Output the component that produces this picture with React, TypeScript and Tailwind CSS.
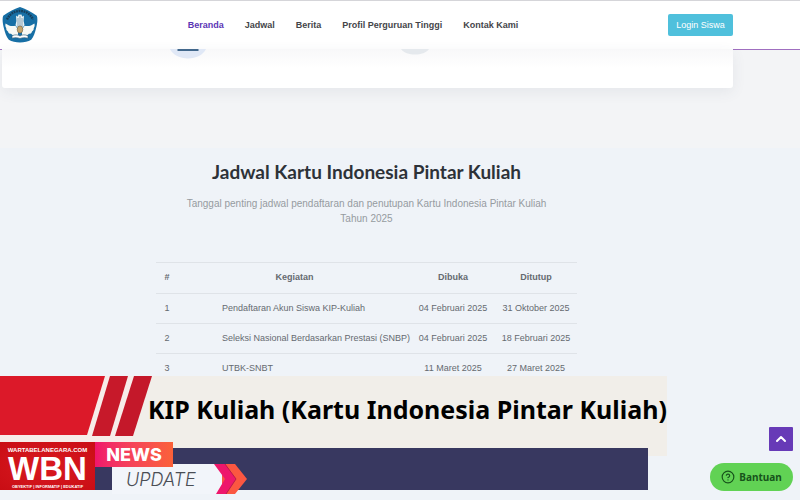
import { ChevronUp, CircleHelp } from 'lucide-react';
import { clsx } from 'clsx';

const NAV_ITEMS = ['Beranda', 'Jadwal', 'Berita', 'Profil Perguruan Tinggi', 'Kontak Kami'];

interface ScheduleRow {
  activity: string;
  opens: string;
  closes: string;
}

const SCHEDULE: ScheduleRow[] = [
  { activity: 'Pendaftaran Akun Siswa KIP-Kuliah', opens: '04 Februari 2025', closes: '31 Oktober 2025' },
  { activity: 'Seleksi Nasional Berdasarkan Prestasi (SNBP)', opens: '04 Februari 2025', closes: '18 Februari 2025' },
  { activity: 'UTBK-SNBT', opens: '11 Maret 2025', closes: '27 Maret 2025' },
];

function MinistryLogo() {
  return (
    <svg viewBox="0 0 36 36" className="size-9" aria-hidden="true">
      <path d="M18 0C23 2 29.500 4.500 34.800 8.800c1.300 3.600.2 8.600-.8 12.800-1 4-2.200 8-4.800 11.200-5.800 3.500-16.600 3.500-22.400 0C4.200 29.600 3 25.600 2 21.600 1 17.400-.1 12.400 1.200 8.800 6.500 4.500 13 2 18 0z" fill="#176fa5" />
      <path d="M5 12.500C8 6.500 12.500 4 18 4s10 2.500 13 8.500" fill="none" stroke="#163f5c" strokeWidth="2.400" strokeDasharray="1.800 .7" />
      <path d="M3.600 16.500c3 2.300 6.400 3.200 9.800 2.200l2.600 3.800v5.800c-3 .9-5.600.2-7-1.500-1.700-.2-2.700-1-3-2.400-1.300-.8-1.900-1.900-1.700-3.200-1-1.400-1.200-3-.7-4.700zM32.400 16.500c-3 2.300-6.400 3.200-9.800 2.200L20 22.500v5.800c3 .9 5.600.2 7-1.500 1.700-.2 2.700-1 3-2.400 1.300-.8 1.900-1.900 1.700-3.200 1-1.400 1.200-3 .7-4.700z" fill="#f7f9f5" />
      <path d="M14 8.500l1.500 1.200L17 7l1 1.200L19 7l1.500 2.700L22 8.500l-.4 5.500.9 4-2.500 4h-4l-2.500-4 .9-4z" fill="#e6eff1" />
      <path d="M16 11v9M18 9v12M20 11v9" stroke="#5a8298" strokeWidth=".7" />
      <ellipse cx="18" cy="22.500" rx="2.800" ry="3.600" fill="#c3a46b" stroke="#705c3d" strokeWidth=".6" />
      <path d="M10 28.800c2.900-1.400 5.800-1.200 8 .2 2.200-1.400 5.100-1.600 8-.2v2.400c-3-.9-5.800-.6-8 .3-2.200-.9-5-1.200-8-.3z" fill="#fff" stroke="#24516b" strokeWidth=".6" />
    </svg>
  );
}

function Header() {
  return (
    <header className="flex h-[49px] items-center border-t border-[#d5d5d9] bg-white pr-[67px] pl-[2px]">
      <a href="#" aria-label="Kemdikbud">
        <MinistryLogo />
      </a>
      <nav className="flex flex-1 justify-center gap-[21px] pt-px text-[9px] font-bold text-[#444549]">
        {NAV_ITEMS.map((item, index) => (
          <a key={item} href="#" className={clsx('whitespace-nowrap', index === 0 && 'text-[#5b35b5]')}>
            {item}
          </a>
        ))}
      </nav>
      <button className="h-[22px] w-[65px] rounded-[2px] bg-[#4fc0dc] pt-px text-[9px] text-white">Login Siswa</button>
    </header>
  );
}

// Bottom edge of the feature card that scrolls under the header
function FeatureCard() {
  return (
    <section className="h-[99px] border-t border-[#a06fc0] bg-[#f3f4f6] pr-[67px] pl-[2px]">
      <div className="-mt-px flex h-[39px] items-start rounded-b-[3px] bg-linear-to-b from-[#f8f8f9] to-white to-50% pl-[168px] shadow-[0_4px_14px_rgba(60,80,100,0.08)]">
        <svg viewBox="0 0 36 10" className="h-[10px] w-9" aria-hidden="true">
          <path d="M0 0h36c-3 6-10 9.500-18 9.500S3 6 0 0z" fill="#e0e8f6" />
          <path d="M7.500 0h21v2h-21z" fill="#42688c" />
        </svg>
        <svg viewBox="0 0 32 10" className="ml-[194px] h-[10px] w-8" aria-hidden="true">
          <path d="M1 0h28c-3 4-8 5.500-14 5.500S4 4 1 0z" fill="#e5e9ed" />
        </svg>
      </div>
    </section>
  );
}

function Schedule() {
  return (
    <section className="flex flex-col items-center pt-3 pr-[67px]">
      <h1 className="font-[Lato,sans-serif] text-[19px] leading-6 font-bold text-[#2d3238]">
        Jadwal Kartu Indonesia Pintar Kuliah
      </h1>
      <p className="mt-3 w-[370px] text-center text-[10px] leading-[15px] text-[#969ba0]">
        Tanggal penting jadwal pendaftaran dan penutupan Kartu Indonesia Pintar Kuliah Tahun 2025
      </p>
      <table className="mt-9 w-[421px] table-fixed border-collapse text-center text-[9px] text-[#656a70]">
        <colgroup>
          <col className="w-[22px]" />
          <col />
          <col className="w-[84px]" />
          <col className="w-[82px]" />
        </colgroup>
        <thead>
          <tr className="h-[31px] border-y border-[#dfe3e8]">
            <th>#</th>
            <th>Kegiatan</th>
            <th>Dibuka</th>
            <th>Ditutup</th>
          </tr>
        </thead>
        <tbody>
          {SCHEDULE.map((row, index) => (
            <tr key={row.activity} className="h-[30px] border-b border-[#dfe3e8]">
              <td>{index + 1}</td>
              <td className="pl-11 text-left whitespace-nowrap">{row.activity}</td>
              <td>{row.opens}</td>
              <td>{row.closes}</td>
            </tr>
          ))}
        </tbody>
      </table>
    </section>
  );
}

function NewsBanner() {
  return (
    <aside className="absolute inset-x-0 bottom-0 h-[124px]">
      <div className="flex h-20 w-5/6 items-start bg-[#f1eee9]">
        <svg viewBox="0 0 152 66" className="h-[66px] w-[152px] shrink-0" aria-hidden="true">
          <path d="M0 0h152l-20 60v6H0z" fill="#f7ece9" />
          <path d="M0 0h105L87 59H0z" fill="#dc1929" />
          <path d="M110 0h18l-18 60H92z" fill="#c7192a" />
          <path d="M134 0h18l-19 60h-18z" fill="#c4182a" />
        </svg>
        <h2 className="-ml-1 pt-4 font-['Noto_Sans',sans-serif] text-[25px] leading-[34px] font-bold whitespace-nowrap text-black">
          KIP Kuliah (Kartu Indonesia Pintar Kuliah)
        </h2>
      </div>
      <div className="-mt-[14px] flex w-[81%] items-start">
        <div className="flex h-12 w-[95px] shrink-0 flex-col items-center bg-radial from-[#d91920] to-[#c90d14] pt-[5px] font-bold whitespace-nowrap text-white">
          <span className="text-[6px] leading-[6px]">WARTABELANEGARA.COM</span>
          <span className="text-[33px] leading-[31px]">WBN</span>
          <span className="text-[4px] leading-[5px]">OBYEKTIF | INFORMATIF | EDUKATIF</span>
        </div>
        <div className="mt-[6px] h-[42px] flex-1 bg-[#383860]">
          <div className="relative -mt-[6px] flex h-[25px] w-[78px] items-center justify-center bg-linear-to-r from-[#f0146c] to-[#fb6138] font-[Inter,sans-serif] text-[18px] font-extrabold text-white">
            NEWS
          </div>
          <div className="-mt-[3px] ml-[17px] flex h-[30px] items-start">
            <div className="h-[30px] w-[106px] bg-[#f2f5fa] pt-[3px] pl-[14px] font-[Inter,sans-serif] text-[18px] leading-[26px] font-light text-[#4a4e55] italic">
              UPDATE
            </div>
            <svg viewBox="0 0 36 30" className="-ml-[6px] h-[30px] w-9" aria-hidden="true">
              <path d="M0 0h8l10 15L8 30H0z" fill="#f2f5fa" />
              <path d="M10 0h13l12 15-12 15H10z" fill="#fb5741" />
              <path d="M2 0h11l11 15-10 15H4l9-15z" fill="#ee176b" />
              <path d="M13 0l11 15-10 15" fill="none" stroke="#b81d4c" strokeWidth="1" />
            </svg>
          </div>
        </div>
      </div>
    </aside>
  );
}

export default function App() {
  return (
    <div className="relative min-h-screen overflow-hidden bg-[#eff3f8] font-['Liberation_Sans',Arial,sans-serif]">
      <Header />
      <main>
        <FeatureCard />
        <Schedule />
      </main>
      <NewsBanner />
      <div className="absolute right-[7px] bottom-[9px] flex flex-col items-end gap-3">
        <button aria-label="Kembali ke atas" className="flex size-6 items-center justify-center rounded-[1px] bg-[#673ab7] text-white">
          <ChevronUp className="size-4" strokeWidth={3} />
        </button>
        <button className="flex h-7 w-[83px] items-center justify-center gap-1 rounded-full bg-[#61d254] font-['Noto_Sans',sans-serif] text-[10px] font-bold text-[#17531b]">
          <CircleHelp className="size-[14px]" />
          Bantuan
        </button>
      </div>
    </div>
  );
}
